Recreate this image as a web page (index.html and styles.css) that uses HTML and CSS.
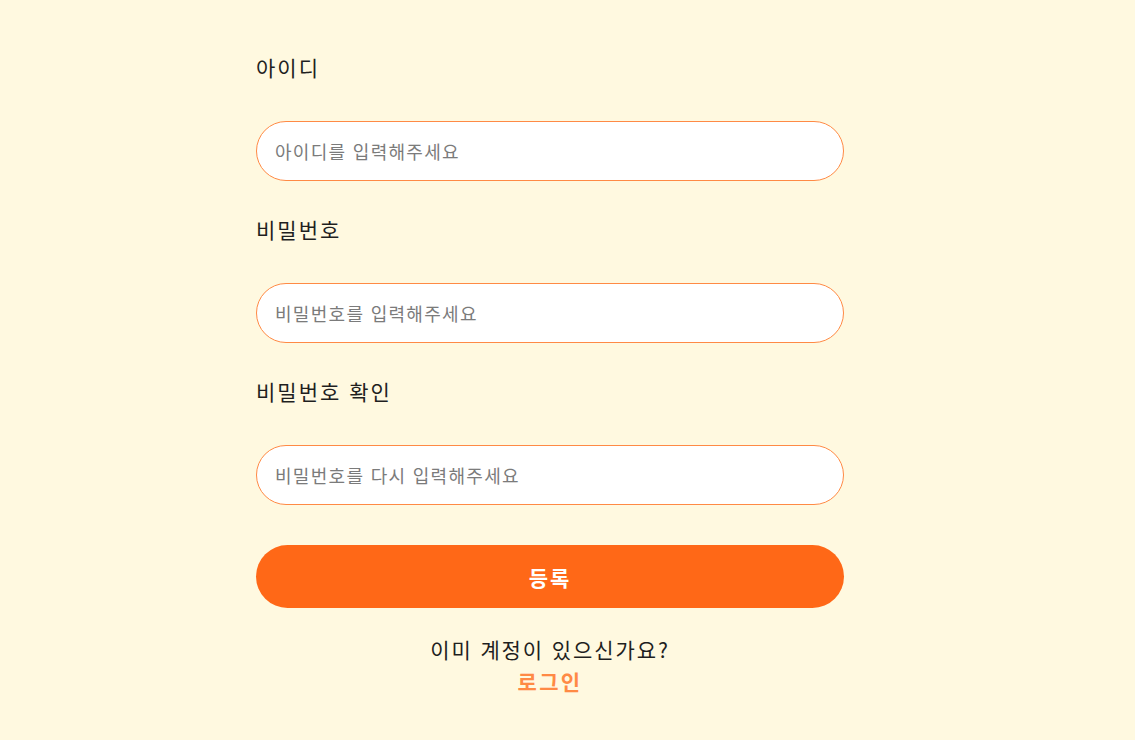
FILE: index.html
```html
<!DOCTYPE html>
<html lang="ko">
<head>
<meta charset="utf-8">
<title>회원가입</title>
<link rel="stylesheet" href="styles.css">
</head>
<body>
<main class="page">
  <form class="form">
    <label class="label" for="uid">아이디</label>
    <input class="field" id="uid" type="text" placeholder="아이디를 입력해주세요">
    <label class="label" for="pw">비밀번호</label>
    <input class="field" id="pw" type="password" placeholder="비밀번호를 입력해주세요">
    <label class="label" for="pw2">비밀번호 확인</label>
    <input class="field last" id="pw2" type="password" placeholder="비밀번호를 다시 입력해주세요">
    <button class="submit" type="button">등록</button>
    <p class="hint">이미 계정이 있으신가요?</p>
    <a class="login" href="#">로그인</a>
  </form>
</main>
</body>
</html>
```

FILE: styles.css
```css
html, body {
  margin: 0;
  padding: 0;
  background: #fff9e0;
}
body {
  font-family: "Noto Sans CJK KR", "Noto Sans", sans-serif;
  color: #1f1f1f;
}
.page {
  padding: 54px 0 0 256px;
}
.form {
  width: 588px;
  display: flex;
  flex-direction: column;
}
.label {
  font-size: 21px;
  line-height: 26px;
  height: 26px;
  letter-spacing: 2px;
  margin-bottom: 41px;
  color: #1f1f1f;
}
.field {
  box-sizing: border-box;
  height: 60px;
  width: 100%;
  border: 1.5px solid #ff8a45;
  border-radius: 30px;
  background: #ffffff;
  padding: 0 18px;
  font-family: inherit;
  font-size: 18px;
  letter-spacing: 1.3px;
  color: #333;
  outline: none;
  margin-bottom: 35px;
}
.field::placeholder {
  color: #7b7b7b;
}
.field.last {
  margin-bottom: 40px;
}
.submit {
  height: 63px;
  width: 100%;
  border: none;
  border-radius: 32px;
  background: #ff6817;
  color: #ffffff;
  font-family: inherit;
  font-size: 21px;
  font-weight: 700;
  letter-spacing: 2px;
  cursor: pointer;
}
.hint {
  margin: 25px 0 0;
  text-align: center;
  font-size: 21px;
  line-height: 32px;
  letter-spacing: 1.9px;
  color: #1f1f1f;
}
.login {
  align-self: center;
  font-size: 21px;
  line-height: 32px;
  font-weight: 700;
  letter-spacing: 2.4px;
  color: #ff8a45;
  text-decoration: none;
}
```
